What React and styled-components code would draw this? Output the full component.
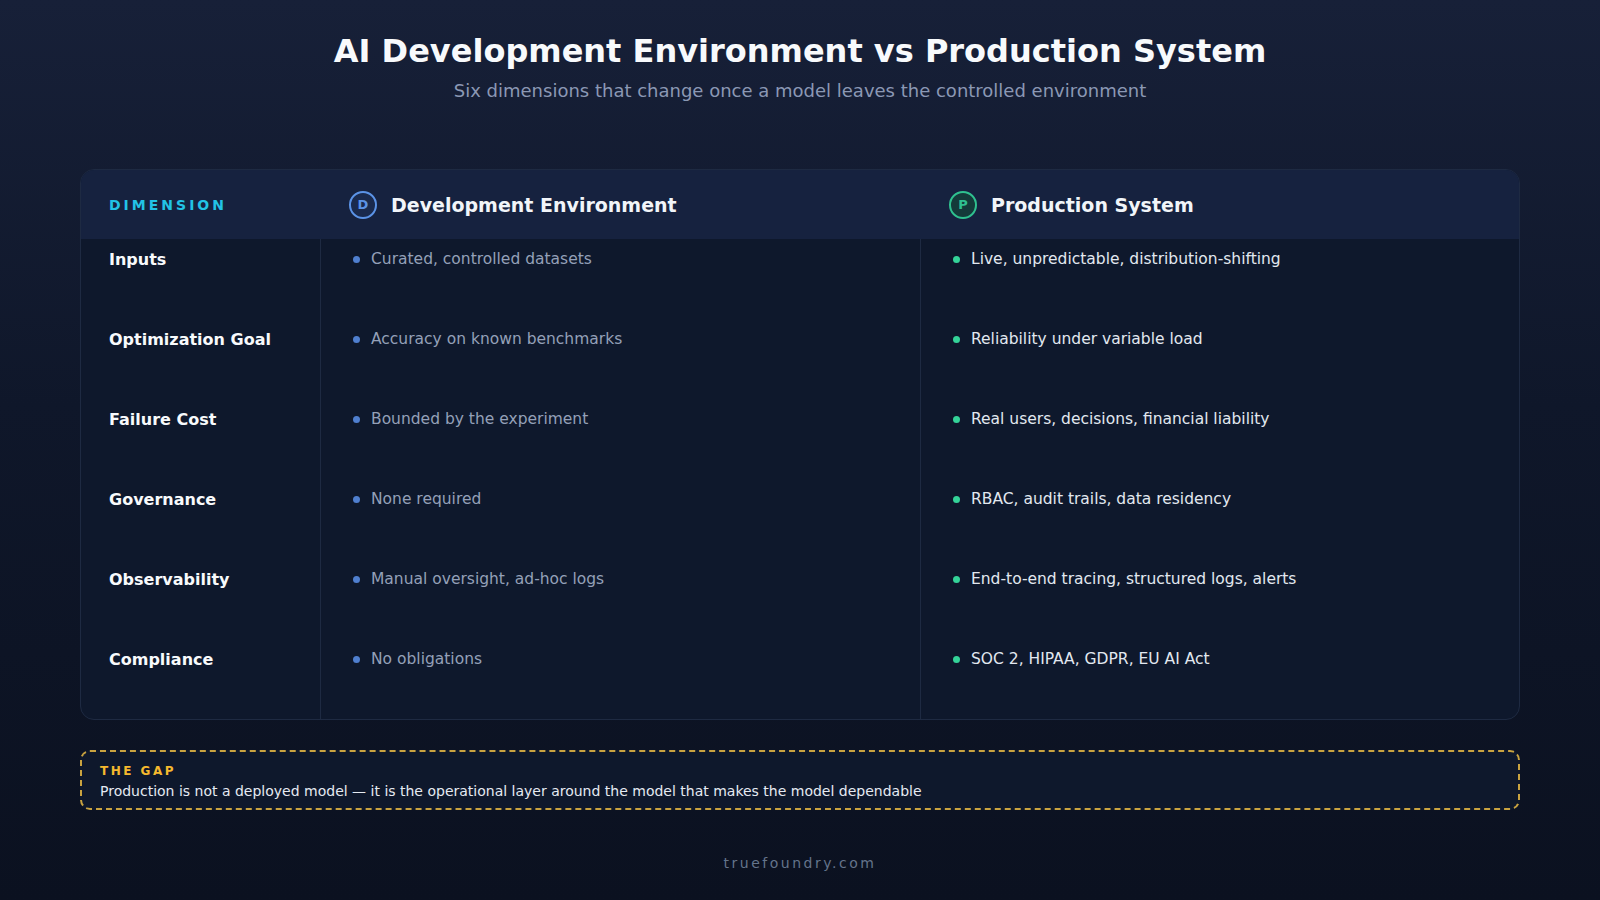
import React from 'react';
import { styled, createGlobalStyle } from 'styled-components';

const Global = createGlobalStyle`
  html, body { margin: 0; padding: 0; }
  body {
    width: 1600px; height: 900px; overflow: hidden;
    font-family: "DejaVu Sans", "Noto Sans", sans-serif;
    background: linear-gradient(180deg, #172038 0%, #0f172a 45%, #0b1120 100%);
  }
`;

const Page = styled.div`
  width: 1600px;
  height: 900px;
  box-sizing: border-box;
  padding: 30px 80px 0;
  display: flex;
  flex-direction: column;
`;

const Title = styled.h1`
  margin: 0;
  text-align: center;
  font-size: 32px;
  font-weight: bold;
  color: #f8fafc;
  line-height: 42px;
`;

const Subtitle = styled.p`
  margin: 8px 0 0;
  text-align: center;
  font-size: 18px;
  color: #8b98b4;
`;

const Table = styled.div`
  margin-top: 68px;
  border: 1px solid #1e2a42;
  border-radius: 14px;
  overflow: hidden;
  background: #0e182c;
  display: grid;
  grid-template-columns: 240px 600px 1fr;
`;

const HeadCell = styled.div`
  height: 69px;
  background: #16223f;
  display: flex;
  align-items: center;
  padding-left: ${p => p.$pad || 28}px;
  gap: 14px;
`;

const DimLabel = styled.span`
  color: #22c3e6;
  font-size: 14px;
  font-weight: bold;
  letter-spacing: 3px;
`;

const Badge = styled.span`
  width: 24px;
  height: 24px;
  border-radius: 50%;
  border: 2px solid ${p => p.$color};
  color: ${p => p.$color};
  display: flex;
  align-items: center;
  justify-content: center;
  font-size: 13px;
  font-weight: bold;
  background: ${p => p.$bg};
`;

const HeadText = styled.span`
  color: #f1f5f9;
  font-size: 19px;
  font-weight: bold;
`;

const Cell = styled.div`
  height: 80px;
  display: flex;
  align-items: center;
  padding-left: ${p => p.$pad || 28}px;
  border-right: ${p => (p.$divider ? '1px solid #1e2a42' : 'none')};
  padding-bottom: ${p => p.$up ? 40 : 0}px;
  box-sizing: border-box;
`;

const RowLabel = styled.span`
  color: #f8fafc;
  font-size: 16px;
  font-weight: bold;
`;

const Dot = styled.span`
  width: 7px;
  height: 7px;
  border-radius: 50%;
  background: ${p => p.$color};
  margin-right: 11px;
`;

const ItemText = styled.span`
  font-size: 15.5px;
  color: ${p => p.$color};
`;

const Gap = styled.div`
  margin-top: 30px;
  border: 2px dashed #c9a340;
  border-radius: 10px;
  padding: 12px 18px 9px;
  background: #0e182c;
`;

const GapLabel = styled.div`
  color: #f5b82e;
  font-size: 12px;
  font-weight: bold;
  letter-spacing: 2.5px;
`;

const GapText = styled.div`
  margin-top: 5px;
  color: #e5eaf2;
  font-size: 14px;
`;

const Footer = styled.div`
  margin-top: 45px;
  text-align: center;
  color: #64748b;
  font-size: 14px;
  letter-spacing: 2.5px;
`;

const rows = [
  ['Inputs', 'Curated, controlled datasets', 'Live, unpredictable, distribution-shifting'],
  ['Optimization Goal', 'Accuracy on known benchmarks', 'Reliability under variable load'],
  ['Failure Cost', 'Bounded by the experiment', 'Real users, decisions, financial liability'],
  ['Governance', 'None required', 'RBAC, audit trails, data residency'],
  ['Observability', 'Manual oversight, ad-hoc logs', 'End-to-end tracing, structured logs, alerts'],
  ['Compliance', 'No obligations', 'SOC 2, HIPAA, GDPR, EU AI Act'],
];

export default function App() {
  return (
    <Page>
      <Global />
      <Title>AI Development Environment vs Production System</Title>
      <Subtitle>Six dimensions that change once a model leaves the controlled environment</Subtitle>
      <Table>
        <HeadCell><DimLabel>DIMENSION</DimLabel></HeadCell>
        <HeadCell $pad={28}>
          <Badge $color="#5b93e6" $bg="#1a2a4d">D</Badge>
          <HeadText>Development Environment</HeadText>
        </HeadCell>
        <HeadCell $pad={28}>
          <Badge $color="#2fc08f" $bg="#143a3a">P</Badge>
          <HeadText>Production System</HeadText>
        </HeadCell>
        {rows.map(([label, dev, prod]) => (
          <React.Fragment key={label}>
            <Cell $divider $up><RowLabel>{label}</RowLabel></Cell>
            <Cell $divider $up $pad={32}>
              <Dot $color="#4f7fcf" />
              <ItemText $color="#94a0b8">{dev}</ItemText>
            </Cell>
            <Cell $up $pad={32}>
              <Dot $color="#34d399" />
              <ItemText $color="#e2e8f0">{prod}</ItemText>
            </Cell>
          </React.Fragment>
        ))}
      </Table>
      <Gap>
        <GapLabel>THE GAP</GapLabel>
        <GapText>Production is not a deployed model — it is the operational layer around the model that makes the model dependable</GapText>
      </Gap>
      <Footer>truefoundry.com</Footer>
    </Page>
  );
}
